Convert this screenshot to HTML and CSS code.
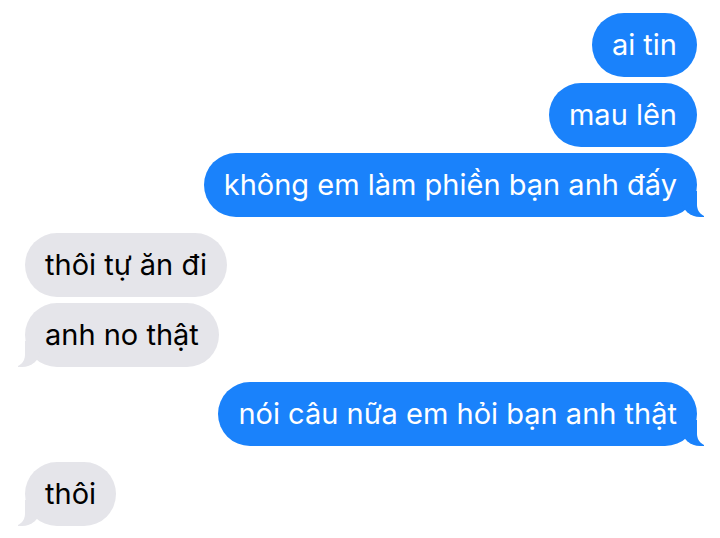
FILE: index.html
```html
<!DOCTYPE html>
<html lang="vi">
<head>
    <meta charset="UTF-8">
    <meta name="viewport" content="width=device-width, initial-scale=1.0">
    <title>Tin nhắn</title>
    <link rel="stylesheet" href="styles.css">
</head>
<body>
    <div class="chat">
        <div class="group">
            <div class="bubble sent">ai tin</div>
            <div class="bubble sent">mau lên</div>
            <div class="bubble sent tail">không em làm phiền bạn anh đấy</div>
        </div>
        <div class="group">
            <div class="bubble received">thôi tự ăn đi</div>
            <div class="bubble received tail">anh no thật</div>
        </div>
        <div class="group">
            <div class="bubble sent tail">nói câu nữa em hỏi bạn anh thật</div>
        </div>
        <div class="group">
            <div class="bubble received tail">thôi</div>
        </div>
    </div>
</body>
</html>
```

FILE: styles.css
```css
body {
    margin: 0;
    background-color: #ffffff;
    font-family: Inter, "Noto Sans", sans-serif;
}
.chat {
    display: flex;
    flex-direction: column;
    gap: 15.5px;
    padding: 13px 23px 0 25px;
}
.group {
    display: flex;
    flex-direction: column;
    gap: 6px;
}
.bubble {
    position: relative;
    padding: 14px 20px;
    font-size: 29px;
    line-height: 36px;
    border-radius: 32px;
    max-width: 85%;
}
.sent {
    align-self: flex-end;
    background-color: #1a82fb;
    color: #ffffff;
}
.received {
    align-self: flex-start;
    background-color: #e5e5ea;
    color: #000000;
}
.tail::before,
.tail::after {
    content: "";
    position: absolute;
    bottom: 0;
    height: 26px;
}
.sent.tail::before {
    right: -7px;
    width: 22px;
    background-color: #1a82fb;
    border-bottom-left-radius: 18px 16px;
}
.sent.tail::after {
    right: -28px;
    width: 28px;
    background-color: #ffffff;
    border-bottom-left-radius: 12px;
}
.received.tail::before {
    left: -7px;
    width: 22px;
    background-color: #e5e5ea;
    border-bottom-right-radius: 18px 16px;
}
.received.tail::after {
    left: -28px;
    width: 28px;
    background-color: #ffffff;
    border-bottom-right-radius: 12px;
}
```
